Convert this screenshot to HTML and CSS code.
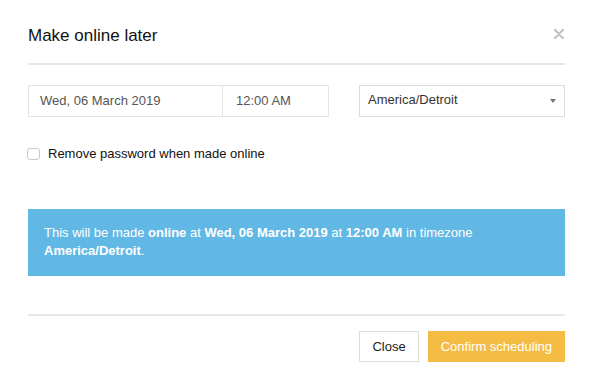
FILE: index.html
```html
<!DOCTYPE html>
<html lang="en">
<head>
    <meta charset="UTF-8">
    <meta name="viewport" content="width=device-width, initial-scale=1.0">
    <title>Make online later</title>
    <link rel="stylesheet" href="styles.css">
</head>
<body>
    <div class="modal">
        <div class="modal-header">
            <h4 class="modal-title">Make online later</h4>
            <button class="close" aria-label="Close">
                <svg width="10" height="10" viewBox="0 0 10 10">
                    <path d="M1 1 L9 9 M9 1 L1 9" stroke="#c2c2c2" stroke-width="2.2" stroke-linecap="round"/>
                </svg>
            </button>
        </div>

        <div class="modal-body">
            <div class="schedule-row">
                <div class="date-group">
                    <input class="field date-field" type="text" value="Wed, 06 March 2019">
                    <input class="field time-field" type="text" value="12:00 AM">
                </div>
                <div class="select-field">
                    <span>America/Detroit</span>
                    <span class="caret"></span>
                </div>
            </div>

            <label class="checkbox-row">
                <input type="checkbox">
                <span>Remove password when made online</span>
            </label>

            <div class="alert-info">
                This will be made <strong>online</strong> at <strong>Wed, 06 March 2019</strong> at <strong>12:00 AM</strong> in timezone <strong>America/Detroit</strong>.
            </div>
        </div>

        <div class="modal-footer">
            <button class="btn btn-default">Close</button>
            <button class="btn btn-warning">Confirm scheduling</button>
        </div>
    </div>
</body>
</html>
```

FILE: styles.css
```css
* {
    margin: 0;
    padding: 0;
    box-sizing: border-box;
}

body {
    font-family: 'Liberation Sans', Arial, sans-serif;
    font-size: 13px;
    line-height: 1.42857;
    color: #333;
    background: white;
}

.modal {
    width: 565px;
    padding-left: 28px;
}

.modal-header {
    display: flex;
    justify-content: space-between;
    align-items: flex-start;
    padding-top: 24px;
    padding-bottom: 15px;
    border-bottom: 2px solid #e6e6e6;
}

.modal-title {
    font-size: 17px;
    font-weight: normal;
    line-height: 24px;
    color: #111;
}

.close {
    background: none;
    border: none;
    margin-top: 5px;
    margin-right: 1px;
    cursor: pointer;
    line-height: 0;
}

.modal-body {
    padding-top: 20px;
}

.schedule-row {
    display: flex;
    justify-content: space-between;
}

.date-group {
    display: flex;
}

.field {
    height: 32px;
    border: 1px solid #e4e4e4;
    padding-bottom: 1px;
    font-family: inherit;
    font-size: 13px;
    color: #555;
    outline: none;
}

.date-field {
    width: 195px;
    padding-left: 11px;
}

.time-field {
    width: 106px;
    border-left: none;
    padding-left: 13px;
}

.select-field {
    width: 206px;
    height: 32px;
    display: flex;
    justify-content: space-between;
    align-items: center;
    border: 1px solid #dcdcdc;
    padding: 0 8px 1px 8px;
    color: #333;
}

.caret {
    width: 0;
    height: 0;
    border-left: 3.5px solid transparent;
    border-right: 3.5px solid transparent;
    border-top: 4px solid #777;
}

.checkbox-row {
    display: flex;
    gap: 8px;
    margin-top: 28px;
    color: #111;
}

.checkbox-row input {
    appearance: none;
    -webkit-appearance: none;
    width: 13px;
    height: 12px;
    margin-top: 3px;
    margin-left: -1px;
    border: 1px solid #c9c9c9;
    border-radius: 3px;
    background: white;
}

.alert-info {
    margin-top: 45px;
    padding: 15px 16px;
    background: #62b8e4;
    color: white;
}

.modal-footer {
    display: flex;
    justify-content: flex-end;
    gap: 9px;
    margin-top: 38px;
    padding-top: 15px;
    border-top: 2px solid #e8e8e8;
}

.btn {
    height: 31px;
    padding: 0 12px;
    font-family: inherit;
    font-size: 13px;
    cursor: pointer;
}

.btn-default {
    background: white;
    border: 1px solid #dedede;
    color: #222;
}

.btn-warning {
    background: #f5bc43;
    border: 1px solid #f5bc43;
    color: white;
}
```
